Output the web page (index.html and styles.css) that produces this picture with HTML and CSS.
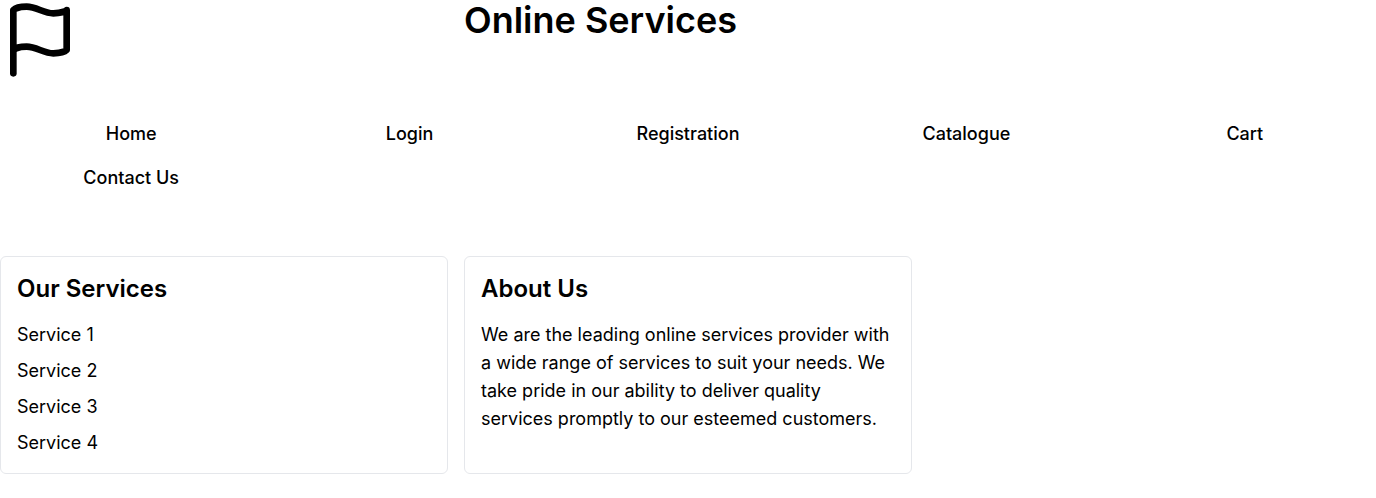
FILE: index.html
```html
<!DOCTYPE html>
<html lang="en">
<head>
<meta charset="utf-8">
<title>Online Services</title>
<link rel="stylesheet" href="styles.css">
</head>
<body>
<header class="header">
  <svg class="logo" viewBox="0 0 24 24" aria-hidden="true"><path d="M4 15s1-1 4-1 5 2 8 2 4-1 4-1V3s-1 1-4 1-5-2-8-2-4 1-4 1z"/><path d="M4 22v-7"/></svg>
  <h1 class="title">Online Services</h1>
</header>
<nav class="nav">
  <a href="#">Home</a>
  <a href="#">Login</a>
  <a href="#">Registration</a>
  <a href="#">Catalogue</a>
  <a href="#">Cart</a>
  <a href="#">Contact Us</a>
</nav>
<main class="cards">
  <section class="card">
    <h2 class="card-title">Our Services</h2>
    <ul class="services">
      <li>Service 1</li>
      <li>Service 2</li>
      <li>Service 3</li>
      <li>Service 4</li>
    </ul>
  </section>
  <section class="card">
    <h2 class="card-title">About Us</h2>
    <p class="about">We are the leading online services provider with a wide range of services to suit your needs. We take pride in our ability to deliver quality services promptly to our esteemed customers.</p>
  </section>
</main>
</body>
</html>
```

FILE: styles.css
```css
* { box-sizing: border-box; margin: 0; padding: 0; }

body {
  font-family: Inter, sans-serif;
  font-size: 18px;
  line-height: 28px;
  color: #000;
  background: #fff;
}

.header,
.cards {
  display: grid;
  grid-template-columns: repeat(3, 1fr);
  gap: 16px;
}

.logo {
  display: block;
  width: 80px;
  height: 80px;
  fill: none;
  stroke: currentColor;
  stroke-width: 2;
  stroke-linecap: round;
  stroke-linejoin: round;
}

.title {
  font-size: 36px;
  line-height: 40px;
  font-weight: 600;
}

.nav {
  display: grid;
  grid-template-columns: repeat(5, 1fr);
  gap: 16px;
  margin: 40px 0 64px;
}

.nav a {
  font-weight: 500;
  text-align: center;
  text-decoration: none;
  color: inherit;
}

.card {
  padding: 16px;
  border: 1px solid #e5e7eb;
  border-radius: 6px;
}

.card-title {
  margin-bottom: 16px;
  font-size: 24px;
  line-height: 32px;
  font-weight: 600;
}

.services {
  display: grid;
  gap: 8px;
  list-style: none;
}
```
